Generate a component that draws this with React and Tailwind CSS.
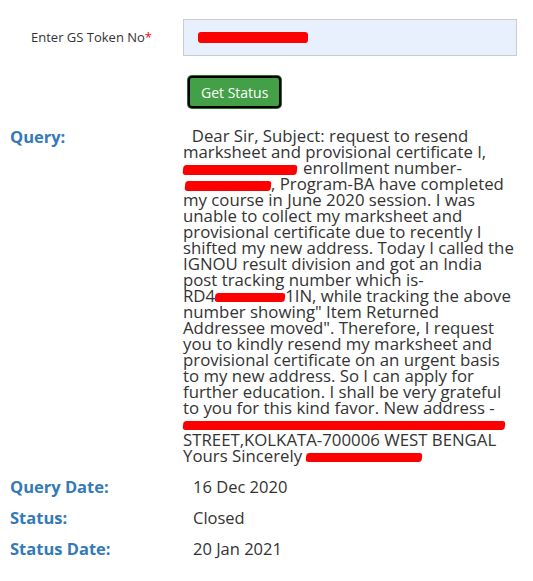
const font = { fontFamily: '"Open Sans", "Liberation Sans", sans-serif' }

function Redact({ w, h = 10, className = '' }) {
  return (
    <span
      className={`inline-block align-middle bg-[#ff0000] rounded-[3px] -skew-x-6 ${className}`}
      style={{ width: w, height: h }}
    />
  )
}

const queryLines = [
  <>&nbsp;&nbsp;Dear Sir, Subject: request to resend</>,
  <>marksheet and provisional certificate I,</>,
  <><Redact w={114} className="mr-[6px]" />enrollment number-</>,
  <><Redact w={86} className="ml-[2px]" />, Program-BA have completed</>,
  <>my course in June 2020 session. I was</>,
  <>unable to collect my marksheet and</>,
  <>provisional certificate due to recently I</>,
  <>shifted my new address. Today I called the</>,
  <>IGNOU result division and got an India</>,
  <>post tracking number which is-</>,
  <>RD4<Redact w={70} h={9} />1IN, while tracking the above</>,
  <>number showing" Item Returned</>,
  <>Addressee moved". Therefore, I request</>,
  <>you to kindly resend my marksheet and</>,
  <>provisional certificate on an urgent basis</>,
  <>to my new address. So I can apply for</>,
  <>further education. I shall be very grateful</>,
  <>to you for this kind favor. New address -</>,
  <><Redact w={322} h={9} /></>,
  <>STREET,KOLKATA-700006 WEST BENGAL</>,
  <>Yours Sincerely <Redact w={116} h={9} /></>,
]

const details = [
  ['Query Date:', '16 Dec 2020'],
  ['Status:', 'Closed'],
  ['Status Date:', '20 Jan 2021'],
]

export default function App() {
  return (
    <div className="w-[533px] h-[581px] bg-white text-[#333] overflow-hidden" style={font}>
      {/* token form */}
      <div className="flex items-center pt-[19px]">
        <label className="w-[183px] pl-[31px] text-[13px]">
          Enter GS Token No<span className="text-[#ff0000]">*</span>
        </label>
        <div className="w-[334px] h-[37px] border border-[#ccc] bg-[#e8f0fe] flex items-center pl-[14px]">
          <Redact w={110} h={11} className="skew-x-0" />
        </div>
      </div>

      <div className="pl-[188px] pt-[20px]">
        <button className="h-[32px] px-[11px] rounded-[4px] bg-[#43a047] text-white text-[14px] border-2 border-black ring-1 ring-[#2e6b30]">
          Get Status
        </button>
      </div>

      {/* query */}
      <div className="flex pt-[20px]">
        <div className="w-[183px] pl-[10px] text-[16.5px] font-bold text-[#337ab7] leading-4 pt-[1px]">Query:</div>
        <div className="text-[16.8px] leading-4 text-[#333]">
          {queryLines.map((line, i) => (
            <div key={i} className="whitespace-nowrap h-4">{line}</div>
          ))}
        </div>
      </div>

      <div className="pt-[13px] flex flex-col gap-[11px]">
        {details.map(([label, value]) => (
          <div key={label} className="flex items-center h-5">
            <div className="w-[193px] pl-[10px] text-[16.5px] font-bold text-[#337ab7]">{label}</div>
            <div className="text-[16.5px]">{value}</div>
          </div>
        ))}
      </div>
    </div>
  )
}
